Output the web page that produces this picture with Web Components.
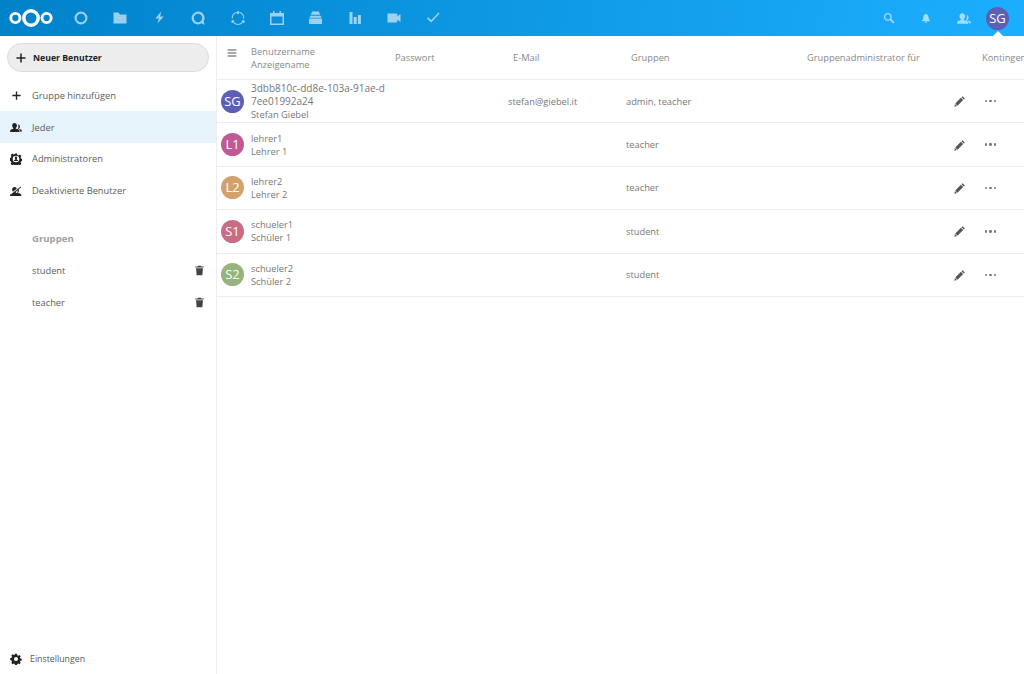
<!DOCTYPE html>
<html lang="de"><head><meta charset="utf-8"><title>Benutzer</title>
<style>
html,body{margin:0;height:100%;overflow:hidden;background:#fff;font-family:"Open Sans","Noto Sans",sans-serif;font-size:9.3px;color:#555}
nc-app{height:674px}
</style></head><body>
<nc-app></nc-app>
<script>
const person='M6 2.500c2 0 3.200 1.500 3.200 3.500 0 1.400-.6 2.600-1.400 3.200v1c2 .6 4.800 1.100 4.800 2.800v1.500H.2V13c0-1.700 2.700-2.200 4.200-2.800v-1C3.500 8.600 2.900 7.400 2.900 6c0-2 1.200-3.500 3.100-3.500z';
const I={
dash:'<circle cx="8" cy="8" r="5.400" fill="none" stroke="#fff" stroke-width="2.200"/>',
folder:'<path d="M1.500 2.500h5l1.500 2h6.500v9h-13z" fill="#fff"/>',
flash:'<path d="M9.800 1.500 3.500 9h3.800L5.800 14.500 12.500 6.800H8.700z" fill="#fff"/>',
talk:'<path d="M8 1.600a6.400 6.400 0 1 0 3.600 11.700L14.800 15l-1.200-3.700A6.400 6.400 0 0 0 8 1.600zm0 2.200a4.200 4.200 0 1 1 0 8.400 4.200 4.200 0 0 1 0-8.400z" fill="#fff"/>',
circles:'<g fill="none" stroke="#fff" stroke-width="1.100"><path d="M6.200 2.600A5.800 5.800 0 0 0 2.300 8.500"/><path d="M9.800 2.600a5.800 5.800 0 0 1 3.900 5.900"/><path d="M4 12.900a5.800 5.800 0 0 0 8 0"/></g><circle cx="8" cy="2.400" r="1.500" fill="#fff"/><circle cx="2.800" cy="11.400" r="1.500" fill="#fff"/><circle cx="13.200" cy="11.400" r="1.500" fill="#fff"/>',
cal:'<path d="M4 1h1.500v2h5V1H12v2h3v12H1V3h3zM2.500 6.500V13.500h11V6.500z" fill="#fff"/>',
stack:'<path d="M4.500 1.500h7L13 5H3z" fill="#fff"/><path d="M2.500 6h11l1 2.200h-13z" fill="#fff"/><path d="M2 9h12a1 1 0 0 1 1 1v4a1 1 0 0 1-1 1H2a1 1 0 0 1-1-1v-4a1 1 0 0 1 1-1z" fill="#fff"/>',
bars:'<path d="M2.500 2h3v12h-3zM6.700 7h3v7h-3zM10.900 5h3v9h-3z" fill="#fff"/>',
video:'<path d="M1.500 3.500h8.800a1 1 0 0 1 1 1v2l3.200-2.500v8l-3.200-2.500v2a1 1 0 0 1-1 1H1.500z" fill="#fff"/>',
check:'<path d="M2 8.500l1.200-1.200 3 3L13.500 2.500l1 1-8.300 9z" fill="#fff"/>',
search:'<circle cx="6.500" cy="6.500" r="4.300" fill="none" stroke="#fff" stroke-width="1.800"/><path d="M9.500 9.500 14.500 14.500" stroke="#fff" stroke-width="2.200"/>',
bell:'<path d="M8 1a1.200 1.200 0 0 1 1.200 1.200c2.300.5 3 2.300 3 4.800 0 2.400.9 3.600 1.800 4.500V13H2v-1.500c.9-.9 1.800-2.100 1.800-4.500 0-2.500.7-4.300 3-4.800A1.200 1.200 0 0 1 8 1zM6.200 14h3.600a1.800 1.800 0 0 1-3.600 0z" fill="#fff"/>',
people:`<path d="${person}" fill="C"/><path d="M10.500 4.500c1.600 0 2.700 1.100 2.700 2.800 0 1.100-.5 2.100-1.100 2.600v.7c1.200.4 3.700.9 3.700 2.300v1h-2.500v-1c0-1.500-1.800-2.200-3-2.700.6-.7 1-1.800 1-3 0-1-.3-2-.8-2.700z" fill="C"/>`,
plus:'<path d="M7 2h2v5h5v2H9v5H7V9H2V7h5z" fill="#222"/>',
gearp:'<path fill-rule="evenodd" d="M6.600.5h2.800l.4 2 1.700.7 1.700-1.100 2 2-1.100 1.700.7 1.700 2 .4v2.800l-2 .4-.7 1.700 1.100 1.700-2 2-1.700-1.100-1.700.7-.4 2H6.600l-.4-2-1.700-.7-1.700 1.100-2-2 1.100-1.700-.7-1.700-2-.4V6.600l2-.4.7-1.700L1.100 2.800l2-2 1.700 1.100 1.700-.7zM8 3.600a4.400 4.400 0 1 0 0 8.800 4.400 4.400 0 0 0 0-8.800z" fill="#222"/><path d="M8 4.600c1 0 1.600.8 1.600 1.700 0 .7-.3 1.300-.7 1.600v.7c.8.300 1.900.6 1.900 1.400v.8H5.200V10c0-.8 1.100-1.100 1.900-1.400v-.7c-.4-.3-.7-.9-.7-1.600 0-.9.6-1.700 1.600-1.700z" fill="#222"/>',
disabled:`<path d="${person}" fill="#222"/><path d="M9 3.500c1.800.3 3 1.800 3 3.500 0 1.100-.4 2.100-1 2.700v.8c1.500.4 4 1 4 2.500v1.500h-3c0-1.800-1.500-2.700-3-3.200.8-.9 1.100-1.800 1.100-3 0-1.400-.4-2.400-1.100-3.200z" fill="#222"/><path d="M.5 11.500 14 1l1 1.400L1.500 13z" fill="#fff"/><path d="M1 12.500 14.300 2l.7.9L1.700 13.400z" fill="#222"/>`,
gear:'<path d="M6.800 1h2.400l.4 1.900 1.300.6 1.700-1 1.700 1.700-1 1.700.5 1.300 1.900.4v2.400l-1.900.4-.5 1.300 1 1.700-1.700 1.700-1.700-1-1.300.5-.4 1.900H6.800l-.4-1.900-1.300-.5-1.700 1-1.700-1.700 1-1.700-.5-1.300L.3 9.200V6.800l1.900-.4.5-1.300-1-1.700 1.700-1.700 1.700 1 1.300-.6zM8 5.300a2.700 2.700 0 1 0 0 5.400 2.700 2.700 0 0 0 0-5.400z" fill="#222"/>',
trash:'<path d="M6 1h4l.6 1H14v1.700H2V2h3.400zM3 4.700h10l-.8 10.300H3.800z" fill="#444"/>',
menu:'<path d="M1 2.500h14v1.600H1zM1 7.200h14v1.600H1zM1 11.900h14v1.600H1z" fill="#555"/>',
pencil:'<path d="M11.500 1.500 14.500 4.500 13 6 10 3zM9.200 3.800l3 3-7.500 7.500-3-3zM1.200 12l2.800 2.800-3.500.8z" fill="#555"/>'
};
const svg=(n,s=16,c='#222')=>`<svg width="${s}" height="${s}" viewBox="0 0 16 16" aria-hidden="true">${I[n].replace(/fill="C"/g,`fill="${c}"`)}</svg>`;
class Base extends HTMLElement{
 render(h){if(!this.shadowRoot)this.attachShadow({mode:'open'});this.shadowRoot.innerHTML=h}
 connectedCallback(){this.draw()}
}
class NcAvatar extends Base{draw(){const s=+this.getAttribute('size')||23;this.render(`<style>:host{display:flex;width:${s}px;height:${s}px;border-radius:50%;background:${this.getAttribute('color')};color:#fff;align-items:center;justify-content:center;font-size:${s*0.56}px;flex:none}</style>${this.getAttribute('text')}`)}}
class NcIcon extends Base{draw(){this.render(`<style>:host{display:flex;flex:none;width:var(--w,36px);justify-content:center;opacity:var(--o,.6)}svg{display:block}</style>${svg(this.getAttribute('name'),+this.getAttribute('size')||13,this.getAttribute('color')||'#fff')}`)}}
class NcHeader extends Base{draw(){
 const apps=['dash','folder','flash','talk','circles','cal','stack','bars','video','check'];
 this.render(`<style>
 :host{display:flex;align-items:center;height:36px;background:linear-gradient(100deg,#0082c9 0%,#1cafff 100%);position:relative;flex:none}
 .logo{margin-left:9px;width:45px;height:20px;display:block;flex:none}
 .apps{display:flex;margin-left:8.800px;gap:3.200px;--w:36px}
 .right{margin-left:auto;display:flex;align-items:center;padding-right:15px;--w:36.500px}
 .tri{position:absolute;left:992.500px;bottom:0;width:0;height:0;border:5px solid transparent;border-top:0;border-bottom-color:#fff}
 .right nc-avatar{margin-left:4px}
 .right nc-icon:nth-child(3){margin-left:1.500px}
 </style>
 <svg class="logo" viewBox="0 0 45 20" aria-hidden="true"><g fill="none" stroke="#fff"><circle cx="22" cy="10" r="7.200" stroke-width="3.400"/><circle cx="6.400" cy="10" r="4.600" stroke-width="2.900"/><circle cx="37.600" cy="10" r="4.600" stroke-width="2.900"/></g></svg>
 <div class="apps">${apps.map(a=>`<nc-icon name="${a}" size="${a=='flash'?15:a=='stack'?15:16}"></nc-icon>`).join('')}</div>
 <div class="right"><nc-icon name="search" size="12"></nc-icon><nc-icon name="bell" size="10"></nc-icon><nc-icon name="people" size="14"></nc-icon><nc-avatar text="SG" color="#5b60b5" size="23"></nc-avatar></div>
 <div class="tri"></div>`)}}
class NcNavItem extends Base{draw(){const ic=this.getAttribute('icon'),tr=this.getAttribute('trail');
 this.render(`<style>:host{display:flex;align-items:center;height:31.750px;padding-left:8px;color:#5c5c5c}
 :host([active]){background:#e6f3fa}:host([heading]){font-weight:700;color:#a0a0a0;margin-top:16.500px;font-size:9.600px}
 .ic{width:16px;margin-right:8px;flex:none;display:flex;justify-content:center}.tr{margin-left:auto;margin-right:11px;display:flex}</style>
 <span class="ic">${ic?svg(ic,ic=='plus'?11:12,'#222'):''}</span><slot></slot>${tr?`<span class="tr">${svg(tr,11)}</span>`:''}`)}}
class NcNav extends Base{draw(){this.render(`<style>
 :host{display:flex;flex-direction:column;width:216px;border-right:1px solid #ededed;flex:none}
 .new{margin:7px 7px 7.500px;height:29px;border:1px solid #dbdbdb;border-radius:15px;background:#ededed;box-sizing:border-box;display:flex;align-items:center;padding-left:7px;font-weight:700;color:#222;gap:6px;font-size:8.700px}
 .set{margin-top:auto;height:30px;display:flex;align-items:center;padding-left:10px;gap:8px;color:#555;font-size:8.800px}
 </style>
 <div class="new">${svg('plus',12)}<span>Neuer Benutzer</span></div>
 <nc-nav-item icon="plus">Gruppe hinzufügen</nc-nav-item>
 <nc-nav-item icon="people" active>Jeder</nc-nav-item>
 <nc-nav-item icon="gearp">Administratoren</nc-nav-item>
 <nc-nav-item icon="disabled">Deaktivierte Benutzer</nc-nav-item>
 <nc-nav-item heading>Gruppen</nc-nav-item>
 <nc-nav-item trail="trash">student</nc-nav-item>
 <nc-nav-item trail="trash">teacher</nc-nav-item>
 <div class="set">${svg('gear',12)}<span>Einstellungen</span></div>`)}}
class NcUserHead extends Base{draw(){this.render(`<style>
 :host{display:flex;align-items:center;height:43px;border-bottom:1px solid #ededed;color:#888;line-height:13px;white-space:nowrap;overflow:hidden}
 .m{width:34px;flex:none;padding-left:10px;box-sizing:border-box;display:flex;margin-top:-10px}
 div{flex:none}
 </style>
 <div class="m">${svg('menu',10)}</div>
 <div style="width:144px">Benutzername<br>Anzeigename</div>
 <div style="width:118px">Passwort</div>
 <div style="width:118px">E-Mail</div>
 <div style="width:176px">Gruppen</div>
 <div style="width:175px">Gruppenadministrator für</div>
 <div>Kontingent</div>`)}}
class NcUserRow extends Base{draw(){const a=n=>this.getAttribute(n)||'';this.render(`<style>
 :host{display:flex;align-items:center;height:42.400px;border-bottom:1px solid #ededed;color:#777;line-height:13px}
 .av{width:34px;flex:none;padding-left:4px;box-sizing:border-box}
 .n{width:257px;flex:none}.n div{width:136px;word-break:break-all}
 :host([long]) .uid{font-size:10px}
 .e{width:118px;flex:none}.g{width:318px;flex:none}
 .p{width:31px;flex:none;display:flex;justify-content:center}.d{margin-left:10px;flex:none;display:flex;}
 i{display:block;width:2.300px;height:2.300px;border-radius:50%;background:#777;margin-right:2px}
 </style>
 <div class="av"><nc-avatar text="${a('initials')}" color="${a('color')}"></nc-avatar></div>
 <div class="n"><div class="uid">${a('uid')}</div><div>${a('name')}</div></div>
 <div class="e">${a('email')}</div><div class="g">${a('groups')}</div>
 <div class="p">${svg('pencil',12)}</div><div class="d" aria-label="Mehr"><i></i><i></i><i></i></div>`)}}
class NcApp extends Base{draw(){this.render(`<style>
 :host{display:flex;flex-direction:column;width:1024px;height:674px;overflow:hidden}
 .b{display:flex;flex:1;min-height:0}main{flex:1;min-width:0;display:block}
 </style><nc-header></nc-header><div class="b"><nc-nav></nc-nav><main>
 <nc-user-head></nc-user-head>
 <nc-user-row long initials="SG" color="#5b60b5" uid="3dbb810c-dd8e-103a-91ae-d7ee01992a24" name="Stefan Giebel" email="stefan@giebel.it" groups="admin, teacher"></nc-user-row>
 <nc-user-row initials="L1" color="#bf5a94" uid="lehrer1" name="Lehrer 1" groups="teacher"></nc-user-row>
 <nc-user-row initials="L2" color="#d3a26a" uid="lehrer2" name="Lehrer 2" groups="teacher"></nc-user-row>
 <nc-user-row initials="S1" color="#c96d85" uid="schueler1" name="Schüler 1" groups="student"></nc-user-row>
 <nc-user-row initials="S2" color="#96b47e" uid="schueler2" name="Schüler 2" groups="student"></nc-user-row>
 </main></div>`)}}
customElements.define('nc-avatar',NcAvatar);customElements.define('nc-icon',NcIcon);customElements.define('nc-header',NcHeader);
customElements.define('nc-nav-item',NcNavItem);customElements.define('nc-nav',NcNav);customElements.define('nc-user-head',NcUserHead);customElements.define('nc-user-row',NcUserRow);customElements.define('nc-app',NcApp);
</script></body></html>
